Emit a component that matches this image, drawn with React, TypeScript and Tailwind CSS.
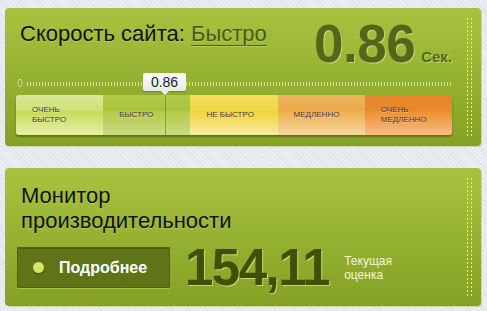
const segments = [
  { label: ["Очень", "быстро"], bg: "bg-[linear-gradient(to_bottom,#d9e894_0%,#cfe074_40%,#c6da57_40%,#e7f1a8_100%)]" },
  { label: ["Быстро"], bg: "bg-[linear-gradient(to_bottom,#b2ca48_0%,#a9c23b_40%,#b3ca47_40%,#cadb82_100%)]" },
  { label: ["Не быстро"], bg: "bg-[linear-gradient(to_bottom,#f3df5c_0%,#f0d744_40%,#efd338_40%,#f8eba4_100%)]" },
  { label: ["Медленно"], bg: "bg-[linear-gradient(to_bottom,#edb55c_0%,#eca94b_40%,#efae4f_40%,#f7d6a0_100%)]" },
  { label: ["Очень", "медленно"], bg: "bg-[linear-gradient(to_bottom,#e5852c_0%,#e98b2c_40%,#ee8f2b_40%,#f5bc86_100%)]" },
];

function Dots() {
  return (
    <div className="absolute top-[10px] bottom-[10px] right-[9px] flex gap-[3px]">
      <div className="w-px bg-[repeating-linear-gradient(to_bottom,#e2eaae_0_2px,transparent_2px_4px)]" />
      <div className="w-px bg-[repeating-linear-gradient(to_bottom,#e2eaae_0_2px,transparent_2px_4px)]" />
    </div>
  );
}

function Card({ children, className }: { children: React.ReactNode; className?: string }) {
  return (
    <div
      className={
        "relative h-[138px] w-[476px] rounded-[4px] bg-[linear-gradient(to_bottom,#a7c33f,#85a125)] shadow-[1px_1px_0_#c9d7a0] " +
        (className ?? "")
      }
    >
      {children}
      <Dots />
    </div>
  );
}

export default function App() {
  return (
    <div
      className="h-[311px] w-[487px] bg-[repeating-linear-gradient(45deg,#dde3e6_0_1px,#ebeff1_1px_3px)] pl-[5px] pt-[8px]"
      style={{ fontFamily: '"Liberation Sans", Arial, sans-serif' }}
    >
      {/* Site speed */}
      <Card className="pl-[11px] pr-[29px] pt-[9px]">
        <div className="flex items-start justify-between">
          <div className="mt-[4px] pl-[4px] text-[22px] leading-[25px] text-[#111] [text-shadow:0_1px_0_rgba(230,240,180,0.35)]">
            Скорость сайта:{" "}
            <span className="text-[#4c5a18] underline decoration-1 underline-offset-[4px]">Быстро</span>
          </div>
          <div className="flex items-baseline gap-[6px] text-[#55661a] [text-shadow:1px_1px_0_rgba(215,230,140,0.7)]">
            <span className="text-[53px] font-bold leading-none tracking-[-0.5px]">0.86</span>
            <span className="text-[15px] font-bold">Сек.</span>
          </div>
        </div>

        {/* scale */}
        <div className="relative mt-[3px] h-[22px] w-[436px]">
          <span className="absolute left-[1px] top-[6px] text-[10px] leading-[10px] text-[#e3edb0] [text-shadow:0_0_1px_#5d7018]">
            0
          </span>
          <div className="absolute left-[11px] right-0 top-[9px] h-[4px] bg-[repeating-linear-gradient(to_right,#d3e196_0_1px,transparent_1px_3px)]" />
          <div className="absolute left-[127px] top-0 flex h-[18px] w-[43px] items-center justify-center rounded-[2px] bg-[linear-gradient(to_bottom,#ffffff,#e9ebe6)] text-[14px] leading-none text-[#151a2a] shadow-[0_1px_1px_rgba(60,70,20,0.4)]">
            0.86
          </div>
          <div className="absolute left-[145px] top-[18px] h-0 w-0 border-x-[4px] border-t-[4px] border-x-transparent border-t-[#eceee9]" />
        </div>

        {/* bar */}
        <div className="relative flex h-[40px] w-[436px] overflow-hidden rounded-[3px] shadow-[0_2px_2px_rgba(60,75,10,0.55)]">
          {segments.map((s) => (
            <div
              key={s.label.join(" ")}
              className={"flex flex-1 flex-col justify-center pl-[16px] text-[8px] uppercase leading-[10px] text-[#3d3842] [text-shadow:0_1px_0_rgba(255,255,255,0.35)] " + s.bg}
            >
              {s.label.map((l) => (
                <span key={l}>{l}</span>
              ))}
            </div>
          ))}
          <div className="absolute left-[149px] top-0 h-full w-px bg-[#86a02c]" />
        </div>
      </Card>

      {/* Performance monitor */}
      <Card className="mt-[22px] pl-[12px] pt-[15px]">
        <div className="pl-[4px] text-[22px] leading-[25px] text-[#111] [text-shadow:0_1px_0_rgba(230,240,180,0.35)]">
          Монитор
          <br />
          производительности
        </div>
        <div className="mt-[14px] flex h-[41px] items-center">
          <button className="flex h-[41px] w-[153px] shrink-0 items-center rounded-[1px] border border-[#4f6310] bg-[#5f7416] pl-[15px] shadow-[inset_0_1px_0_rgba(40,50,5,0.35),0_1px_0_rgba(200,220,120,0.5)]">
            <span className="h-[11px] w-[11px] rounded-full bg-[#d5e56b] shadow-[0_1px_1px_rgba(30,40,0,0.5)]" />
            <span className="ml-[15px] text-[16px] font-bold text-white">Подробнее</span>
          </button>
          <span className="ml-[15px] text-[51px] font-bold leading-none tracking-[-1.5px] text-[#424f08] [text-shadow:1px_1px_0_rgba(215,232,140,0.75)]">
            154,11
          </span>
          <div className="ml-[15px] text-[12px] leading-[14px] text-[#f2f6dc]">
            Текущая
            <br />
            оценка
          </div>
        </div>
      </Card>
    </div>
  );
}
